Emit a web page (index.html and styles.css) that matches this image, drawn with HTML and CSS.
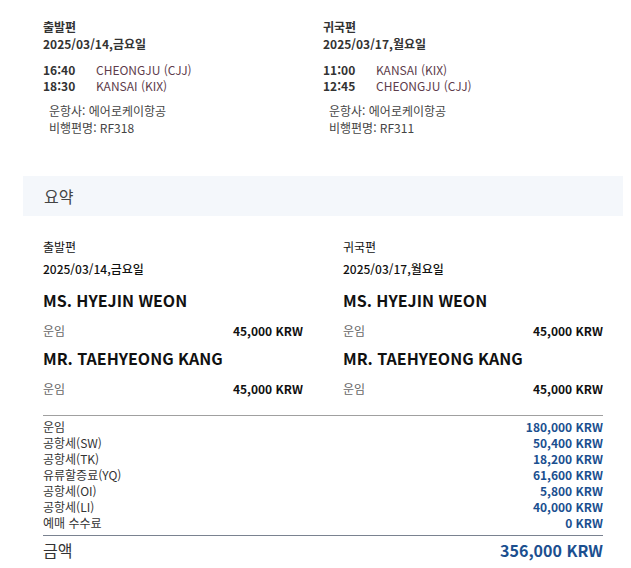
FILE: index.html
```html
<!DOCTYPE html>
<html lang="ko">
<head>
<meta charset="utf-8">
<link rel="stylesheet" href="styles.css">
</head>
<body>
<div class="flights">
  <div class="flight">
    <div class="fl-title">출발편</div>
    <div class="fl-date">2025/03/14,금요일</div>
    <div class="legs">
      <div class="leg"><span class="time">16:40</span><span class="place">CHEONGJU (CJJ)</span></div>
      <div class="leg"><span class="time">18:30</span><span class="place">KANSAI (KIX)</span></div>
    </div>
    <div class="info">
      <div>운항사: 에어로케이항공</div>
      <div>비행편명: RF318</div>
    </div>
  </div>
  <div class="flight">
    <div class="fl-title">귀국편</div>
    <div class="fl-date">2025/03/17,월요일</div>
    <div class="legs">
      <div class="leg"><span class="time">11:00</span><span class="place">KANSAI (KIX)</span></div>
      <div class="leg"><span class="time">12:45</span><span class="place">CHEONGJU (CJJ)</span></div>
    </div>
    <div class="info">
      <div>운항사: 에어로케이항공</div>
      <div>비행편명: RF311</div>
    </div>
  </div>
</div>

<div class="summary-bar">요약</div>

<div class="summary">
  <div class="sum-col">
    <div class="s-title">출발편</div>
    <div class="s-date">2025/03/14,금요일</div>
    <div class="pax">MS. HYEJIN WEON</div>
    <div class="fare"><span class="fare-label">운임</span><span class="fare-val">45,000 KRW</span></div>
    <div class="pax">MR. TAEHYEONG KANG</div>
    <div class="fare"><span class="fare-label">운임</span><span class="fare-val">45,000 KRW</span></div>
  </div>
  <div class="sum-col">
    <div class="s-title">귀국편</div>
    <div class="s-date">2025/03/17,월요일</div>
    <div class="pax">MS. HYEJIN WEON</div>
    <div class="fare"><span class="fare-label">운임</span><span class="fare-val">45,000 KRW</span></div>
    <div class="pax">MR. TAEHYEONG KANG</div>
    <div class="fare"><span class="fare-label">운임</span><span class="fare-val">45,000 KRW</span></div>
  </div>
</div>

<div class="totals">
  <div class="breakdown">
    <div class="row"><span>운임</span><span class="amt">180,000 KRW</span></div>
    <div class="row"><span>공항세(SW)</span><span class="amt">50,400 KRW</span></div>
    <div class="row"><span>공항세(TK)</span><span class="amt">18,200 KRW</span></div>
    <div class="row"><span>유류할증료(YQ)</span><span class="amt">61,600 KRW</span></div>
    <div class="row"><span>공항세(OI)</span><span class="amt">5,800 KRW</span></div>
    <div class="row"><span>공항세(LI)</span><span class="amt">40,000 KRW</span></div>
    <div class="row"><span>예매 수수료</span><span class="amt">0 KRW</span></div>
  </div>
  <div class="grand"><span class="grand-label">금액</span><span class="grand-amt">356,000 KRW</span></div>
</div>
</body>
</html>
```
FILE: styles.css
```css
html, body {
  margin: 0;
  padding: 0;
  background: #fff;
}
body {
  font-family: "Noto Sans CJK KR", "Noto Sans", sans-serif;
  font-size: 12px;
  color: #333;
  width: 631px;
  overflow: hidden;
}
.flights {
  display: grid;
  grid-template-columns: 280px 1fr;
  padding: 18px 0 0 43px;
}
.fl-title, .fl-date {
  font-weight: 700;
  line-height: 17px;
  color: #333;
}
.legs {
  margin-top: 10px;
}
.leg {
  display: flex;
  line-height: 16px;
}
.time {
  width: 53px;
  font-weight: 700;
  color: #333;
}
.place {
  color: #5e3d4c;
}
.info {
  margin-top: 8px;
  padding-left: 6px;
  line-height: 17px;
  color: #444;
}
.summary-bar {
  margin: 40px 8px 0 23px;
  height: 40px;
  background: #f4f7fb;
  font-size: 16px;
  line-height: 40px;
  padding-left: 21px;
  color: #444;
}
.summary {
  display: grid;
  grid-template-columns: 260px 260px;
  column-gap: 40px;
  padding: 20px 0 0 43px;
}
.s-title {
  line-height: 22px;
  color: #111;
}
.s-date {
  line-height: 22px;
  padding-bottom: 3px;
  font-weight: 500;
  color: #111;
}
.pax {
  margin-top: 5px;
  font-size: 16px;
  font-weight: 700;
  line-height: 24px;
  color: #111;
}
.fare {
  display: flex;
  justify-content: space-between;
  line-height: 20px;
  margin-top: 9px;
  margin-bottom: 0;
}
.fare-label {
  color: #666;
}
.fare-val {
  font-weight: 700;
  color: #111;
}
.totals {
  margin: 16px 28px 0 43px;
}
.breakdown {
  border-top: 1px solid #a0a0a0;
  border-bottom: 1px solid #7a8290;
  padding: 3px 0 4px;
}
.row {
  display: flex;
  justify-content: space-between;
  line-height: 16px;
  color: #333;
}
.amt {
  font-weight: 700;
  color: #1b4f8f;
}
.grand {
  display: flex;
  justify-content: space-between;
  font-size: 16px;
  line-height: 24px;
  padding-top: 2px;
}
.grand-label {
  color: #333;
}
.grand-amt {
  font-weight: 700;
  color: #1b4f8f;
}
```
